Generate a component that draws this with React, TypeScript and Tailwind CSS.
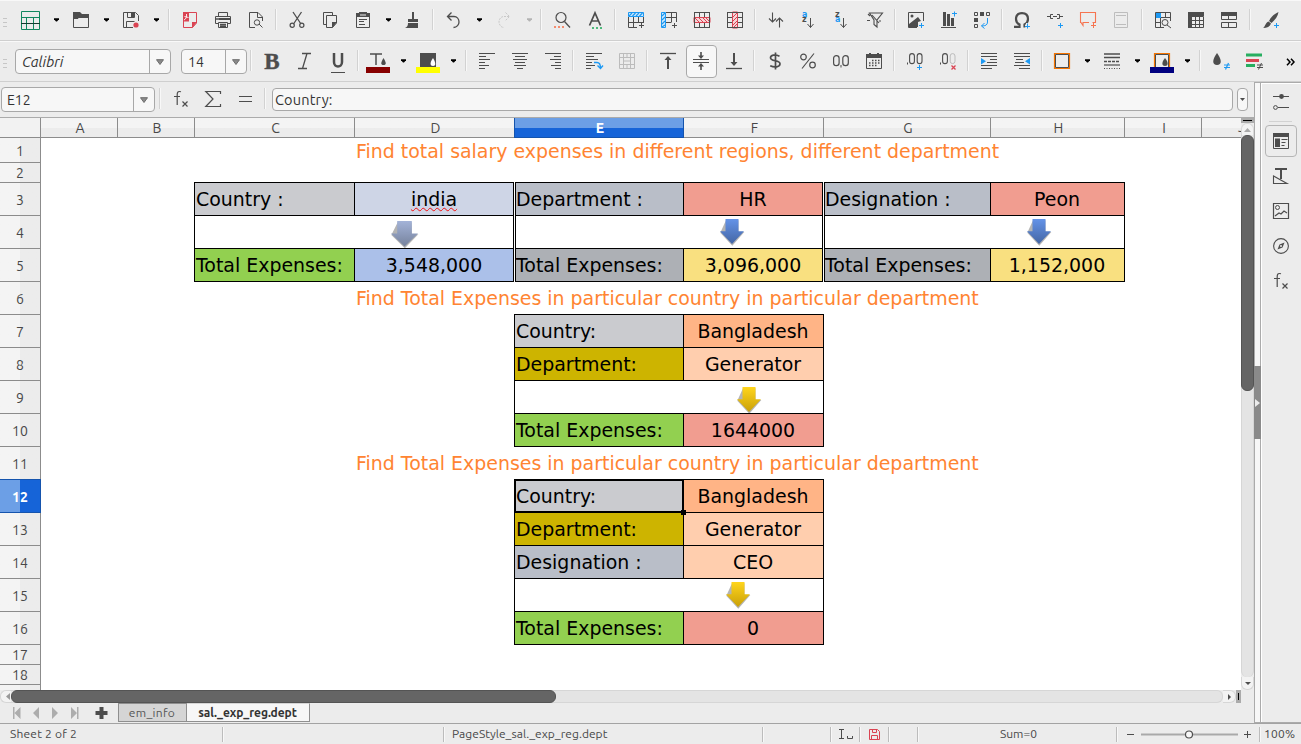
import React from "react";

type Kids = { children?: React.ReactNode };

const K = "#4d4d4d";
const B = "#1d99f3";
const R = "#da4453";
const G = "#27ae60";
const O = "#f67450";

function Icon({ children, w = 16 }: Kids & { w?: number }) {
  return (
    <svg width={w} height={20} viewBox={`0 0 ${w} 20`} fill="none" stroke={K} strokeWidth={1} className="block shrink-0 overflow-visible">
      {children}
    </svg>
  );
}

function Slot({ children }: Kids) {
  return <div className="flex w-[33px] shrink-0 pl-[9px]">{children}</div>;
}

function WideSlot({ children }: Kids) {
  return <div className="flex w-[33px] shrink-0 pl-[5px]">{children}</div>;
}

function Caret({ off = false }: { off?: boolean }) {
  return (
    <div className="flex w-[17px] shrink-0 pt-[6px] pl-[7px]">
      <svg width="5" height="4" viewBox="0 0 5 4" className="block">
        <path d="M0 .3h5v1L3 3.5H2L0 1.3z" fill={off ? "#b4b4b4" : "#000"} />
      </svg>
    </div>
  );
}

function Sep({ className = "w-[8px]" }: { className?: string }) {
  return (
    <div className={"-mt-[3px] flex h-[21px] shrink-0 justify-center " + className}>
      <div className="w-[2px] border-l border-[#d2d2d2] bg-[#f8f8f8]" />
    </div>
  );
}

function Grip() {
  return (
    <div className="mt-[6px] ml-[3px] flex h-[9px] w-[4px] shrink-0 flex-col justify-between">
      <div className="h-px bg-[#c6c6c6]" />
      <div className="h-px bg-[#c6c6c6]" />
      <div className="h-px bg-[#c6c6c6]" />
    </div>
  );
}

function SortLetter({ y, fill, children }: Kids & { y: number; fill: string }) {
  return (
    <text x={1} y={y} fontSize={8} fill={fill} stroke="none" fontFamily='"DejaVu Sans", sans-serif' fontWeight="bold">
      {children}
    </text>
  );
}

const gridLines = "M.5 .5h15v15H.5zM.5 5.5h15M.5 10.5h15M5.5 .5v15M10.5 .5v15";

function Standard() {
  return (
    <div className="flex h-[41px] items-start border-t border-b border-t-[#f8f8f8] border-b-[#cfcfcf] pt-[11px]">
      <Grip />
      <div className="flex w-[40px] shrink-0 pl-[14px]">
        <Icon w={19}>
          <path d="M.5 -.5h18v18H.5z M.5 5.5h18 M5.5 5.5v12 M12.5 5.5v12" stroke="#12875f" />
          <path d="M0 11.5h19" stroke="#143c30" />
        </Icon>
      </div>
      <Caret />
      <Slot>
        <Icon><path d="M0 0h7l2 2h7v4H6L4 6H1v9H0z" fill={K} stroke="none" /><path d="M.5 6.5H5l1.500-2H15.500v11H.5z" /></Icon>
      </Slot>
      <Caret />
      <Slot>
        <Icon>
          <path d="M10 15.500H.5V.5h12l3 3V9M3.500 15.500v-6h8M4.500 .5v5h7v-5" />
          <path d="M8 1h3v4H8z" fill={K} stroke="none" /><circle cx="13" cy="13" r="2.600" fill={R} stroke="none" />
        </Icon>
      </Slot>
      <Caret />
      <Sep className="w-[9px]" />
      <Slot>
        <Icon>
          <path d="M1 0h6v9.500H1z" fill={R} stroke="none" /><path d="M7 .5h7.500V11l-4 4.500H1.500V9" stroke={R} />
          <path d="M15 10h-5v6z" fill={R} stroke="none" /><path d="M2 8c2-1 3-3 2.500-6M2.500 4.500c1.500 0 2.500 1 4 1" stroke="#fff" strokeWidth=".9" />
        </Icon>
      </Slot>
      <Slot>
        <Icon><path d="M3.500 4V.5h9V4M.5 4.500h15v7H.5z" /><path d="M4 6h11v2H4zM4 11h8v4H4z" fill={K} stroke="none" /><path d="M3.500 10.500h9v5h-9z" fill="#ececec" /><path d="M5 12.500h6M1 7h14M5 14.200h6" strokeWidth="1.600" /></Icon>
      </Slot>
      <Slot>
        <Icon><path d="M7 15.500H1.500V.5H10l4.500 4.500v4M9.500 .5v5h5M11 12l3.500 3.500" /><circle cx="9" cy="10.500" r="2.700" /></Icon>
      </Slot>
      <Sep />
      <Slot>
        <Icon><path d="M4 0l8 12M12.500 0L4.500 12" strokeWidth="1.300" /><circle cx="3.200" cy="13.200" r="2.100" strokeWidth="1.200" /><circle cx="12.800" cy="13.200" r="2.100" strokeWidth="1.200" /></Icon>
      </Slot>
      <Slot>
        <Icon><path d="M4 12.500H1.500V.5h9V3M4.500 15.500v-12h10V11l-4 4.500z" /><path d="M15 10h-5v6z" fill={K} stroke="none" /></Icon>
      </Slot>
      <Slot>
        <Icon><path d="M1.500 2.500h13v13h-13z" /><path d="M1 1h3V0h8v1h3v4H1z" fill={K} stroke="none" /><path d="M5 3h6" stroke="#ececec" /><path d="M4 7.500h8M4 9.500h5M4 12.500h6" /></Icon>
      </Slot>
      <Caret />
      <Slot>
        <Icon><path d="M7 0h2v7h4v3H3V7h4zM3 11h10v5H0c2-1 3-2 3-5z" fill={K} stroke="none" /></Icon>
      </Slot>
      <Sep />
      <Slot>
        <Icon><path d="M5.500 .5l-4 4 4 4M2 4.500h6c3 0 5 2.500 5 5.500 0 2.500-2 5.500-5.500 5.500" strokeWidth="1.300" /></Icon>
      </Slot>
      <Caret />
      <Slot>
        <Icon><g stroke="#c9c9c9" strokeDasharray="2 1"><path d="M9.500 .5l4 4-4 4M13 4.500H8c-3 0-5 2.500-5 5.500 0 2.500 2 5.500 5 5.500" /></g></Icon>
      </Slot>
      <Caret off />
      <Sep />
      <Slot>
        <Icon><circle cx="7" cy="5.500" r="5" strokeWidth="1.200" /><path d="M10.500 9.500l5.500 6" strokeWidth="1.300" /><path d="M0 15h2M4 15h2M8 15h2" stroke={O} strokeWidth="2" opacity=".8" /></Icon>
      </Slot>
      <Slot>
        <Icon><path d="M2.500 13.500L8 .800 13.500 13.500M4.500 9h7" strokeWidth="1.700" /><path d="M5 16h2M9 16h2M13 16h2" stroke={G} strokeWidth="2" opacity=".8" /></Icon>
      </Slot>
      <Sep />
      <Slot>
        <Icon><path d="M.5 5v10.500H9M.5 10.500h15M5.500 5v10.500M10.500 5v6M15.500 5v6" /><path d="M.5 .5h15v4H.5z" stroke={B} fill="#cfe9fb" /><path d="M1 4l3-3M4.500 4l3-3M8 4l3-3M11.500 4l3-3" stroke={B} strokeWidth="1.200" /><path d="M13.500 11v5M11 13.500h5" /></Icon>
      </Slot>
      <Slot>
        <Icon><path d="M5 .5h10.500V10M5 5.500h10.500M5 10.500h5M10.500 .5v10" /><path d="M.5 .5h4v15h-4z" stroke={B} fill="#cfe9fb" /><path d="M1 4l3-3M1 8l3-3M1 12l3-3M1 15l3-2" stroke={B} strokeWidth="1.200" /><path d="M13.500 11v5M11 13.500h5" /></Icon>
      </Slot>
      <Slot>
        <Icon><path d={gridLines} /><path d="M0 5.500h16v5H0z" fill="#f6d5d8" stroke={R} /><path d="M1 6l4 4M5 6l4 4M9 6l4 4M12 6l3 3" stroke={R} /><path d="M.5 0v16M15.500 0v16" /></Icon>
      </Slot>
      <Slot>
        <Icon><path d={gridLines} /><path d="M5.500 0v16h5V0z" fill="#f6d5d8" stroke={R} /><path d="M6 5l4-4M6 9l4-4M6 13l4-4M7 15l3-3" stroke={R} /><path d="M0 .5h16M0 15.500h16" /></Icon>
      </Slot>
      <Sep />
      <Slot>
        <Icon><path d="M4.500 .5v9M1 6.500l3.500 3.500L8 6.500M11.500 6v9.500M8 9.500L11.500 6l3.500 3.500" strokeWidth="1.100" /></Icon>
      </Slot>
      <Slot>
        <Icon><SortLetter y={4.600} fill={B}>a</SortLetter><SortLetter y={10.400} fill={K}>z</SortLetter><path d="M9.500 6v9.500M6.500 12l3 3.500 3-3.500" /></Icon>
      </Slot>
      <Slot>
        <Icon><SortLetter y={4.600} fill={K}>z</SortLetter><SortLetter y={10.400} fill={B}>a</SortLetter><path d="M9.500 6v9.500M6.500 12l3 3.500 3-3.500" /></Icon>
      </Slot>
      <Slot>
        <Icon><path d="M2.500 1h13L10 8v7l-3-2.500V8zM0 8.500h3M5 3l7 8M1 2l2 2M12 9h2" strokeWidth="1.100" /></Icon>
      </Slot>
      <Sep />
      <Slot>
        <Icon><path d="M9 15.500H.5V.5h15V9" /><circle cx="4" cy="4" r="1.500" fill={K} stroke="none" /><path d="M1 15v-3l9-7 3 4-3 1v5z" fill={K} stroke="none" /><path d="M13.500 11v5M11 13.500h5" stroke={B} /></Icon>
      </Slot>
      <Slot>
        <Icon><path d="M2 0h3v14H2zM6 2h3v12H6zM10 6h3v8h-3z" fill={K} stroke="none" /><path d="M0 15.500h15" /><path d="M13.500 -.5v5M11 1.500h5" stroke={B} /></Icon>
      </Slot>
      <Slot>
        <Icon><path d="M.5 .5h3v3h-3zM12.500 .5h3v3h-3zM.5 12.500h3v3h-3z" /><path d="M6 0h4v4H6zM0 6h4v4H0z" fill={K} stroke="none" /><path d="M13.500 6v4c0 3-2 4-6 4M10.500 11l-3 3 3 2.500" stroke={B} /></Icon>
      </Slot>
      <Sep className="w-[7px]" />
      <Slot>
        <Icon><path d="M0 14.800h5.500V12.500C3.500 11.500 2 10 2 7c0-4 2.500-5.800 6-5.800s6 1.800 6 5.800c0 3-1.500 4.500-3.500 5.500v3" strokeWidth="2.200" /><path d="M13.500 11v6M11 14h5.500" stroke="#ececec" strokeWidth="3" /><path d="M13.500 11.500v5M11 14.500h5" stroke={B} /></Icon>
      </Slot>
      <Slot>
        <Icon><path d="M0 4.500h3M6 2.500H3.500v4H6M6 4.500h4M10 2.500h2.500v4H10M13 4.500h3" /><path d="M13.500 11v5M11 13.500h5" stroke={B} /></Icon>
      </Slot>
      <Slot>
        <Icon><path d="M9 10.500H3v3l-2-3H.5V.5h15v10h-3" stroke={O} strokeWidth="1.100" /><path d="M13.500 11v5M11 13.500h5" stroke={O} /></Icon>
      </Slot>
      <Slot>
        <Icon><path d="M1.500 .5h13v15h-13zM3 3.500h10M3 12.500h10" stroke="#bdbdbd" /></Icon>
      </Slot>
      <Sep className="w-[9px]" />
      <Slot>
        <Icon><path d="M9 15.500H.5V.5h15V9M.5 5.500h15M.5 10.500H6M5.500 .5v15M10.500 .5v5" /><path d="M1 1h5v5H1z" fill={B} stroke="none" /><circle cx="10" cy="10.500" r="3" fill="#ececec" /><path d="M12 13l4 3" /></Icon>
      </Slot>
      <Slot>
        <Icon><path d="M0 0h16v4H4v12H0z" fill={K} stroke="none" /><path d="M4 4.500h11.500v11H4M4 8.500h12M4 12.500h12M7.500 4v12M11.500 4v12" /></Icon>
      </Slot>
      <Slot>
        <Icon><path d="M0 0h16v4H0z" fill={K} stroke="none" /><path d="M.5 3.500h15v4H.5zM.5 10.500h15v5H.5zM7.500 3.500v4M7.500 10.500v5" /></Icon>
      </Slot>
      <Sep className="w-[9px]" />
      <Slot>
        <Icon><path d="M15.500 0C11 2 8 5 6 9l2.500 2C12 8 15 4 15.500 0zM5.500 9.500l2.500 2C7 14.500 4 16 0 16c2-1 2.500-5.500 5.500-6.500z" fill={K} stroke="none" /><path d="M13.500 11v5M11 13.500h5" stroke={B} /></Icon>
      </Slot>
    </div>
  );
}

function DropButton({ className = "" }: { className?: string }) {
  return (
    <div className={"flex items-center justify-center border-l border-[#a8a8a8] pt-px " + className}>
      <svg width="8" height="6" viewBox="0 0 8 6"><path d="M.5 .7h7L4 5.500z" fill="#8b8b8b" stroke="#6c6c6c" /></svg>
    </div>
  );
}

const box = "flex shrink-0 rounded-[4px] border border-[#a8a8a8] bg-[#f7f7f7] text-[#333]";
const ui = "font-['Ubuntu','Open_Sans',sans-serif]";

function Formatting() {
  return (
    <div className="flex h-[41px] items-start border-t border-b border-t-[#f9f9f9] border-b-[#cfcfcf] pt-[11px]">
      <Grip />
      <div className={box + " -mt-[4px] ml-[8px] h-[25px] w-[156px] items-stretch"}>
        <div className="flex-1 pl-[6px] text-[14.5px] leading-[24px] italic">Calibri</div>
        <DropButton className="w-[21px]" />
      </div>
      <div className={box + " -mt-[4px] ml-[10px] h-[25px] w-[66px] items-stretch"}>
        <div className="flex-1 pl-[6px] text-[14px] leading-[24px]">14</div>
        <DropButton className="w-[21px]" />
      </div>
      <Sep />
      <Slot><Icon><text x={8} y={16} fontSize={23} fill={K} stroke={K} strokeWidth=".4" fontFamily='"Liberation Serif", serif' fontWeight="bold" textAnchor="middle">B</text></Icon></Slot>
      <Slot><Icon><path d="M5 .5h9M1 15.500h9M10 .5l-4.500 15" strokeWidth="1.300" /></Icon></Slot>
      <Slot><Icon><path d="M4 0v9c0 6 8 6 8 0V0" strokeWidth="2.500" /><path d="M1 19.500h14" /></Icon></Slot>
      <Sep className="w-[7px]" />
      <WideSlot>
        <Icon w={24}><path d="M4 1h12M10 1v11" strokeWidth="1.500" /><path d="M17.500 5c-3 5-3 7 0 7s3-2 0-7z" fill={K} stroke="none" /><path d="M0 14h24v6H0z" fill="#870000" stroke="none" /></Icon>
      </WideSlot>
      <Caret />
      <WideSlot>
        <Icon w={24}><path d="M4 0h16v14H4z" fill={K} stroke="none" /><path d="M17 5c-3.500 5-3 8 0 8s3-3 0-8z" fill="#fff" stroke="none" /><path d="M0 14h24v6H0z" fill="#ff0" stroke="none" /></Icon>
      </WideSlot>
      <Caret />
      <Sep className="w-[9px]" />
      <Slot><Icon><path d="M0 .5h16M0 3.500h7M0 6.500h11M0 9.500h6M0 12.500h10M0 15.500h6" strokeWidth="1.200" /></Icon></Slot>
      <Slot><Icon><path d="M0 .5h16M3 3.500h10M1 6.500h14M3 9.500h10M2 12.500h12M5 15.500h6" strokeWidth="1.200" /></Icon></Slot>
      <Slot><Icon><path d="M0 .5h16M9 3.500h7M5 6.500h11M10 9.500h6M6 12.500h10M10 15.500h6" strokeWidth="1.200" /></Icon></Slot>
      <Sep />
      <Slot><Icon><path d="M0 .5h16M0 3.500h8M0 6.500h12M0 9.500h6M0 12.500h9M0 15.500h5" strokeWidth="1.200" /><path d="M8 9.500h3c3 0 3.500 2 3.500 5.500M11.500 12.500l3 3 2.500-3" stroke={B} strokeWidth="1.300" /></Icon></Slot>
      <Slot><Icon><path d="M.5 .5h15v15H.5zM.5 4.500h15M.5 11.500h15M4.500 .5v15M8 .5v4M11.500 .5v15M8 12v4M5 8h6" stroke="#bcbcbc" /></Icon></Slot>
      <Sep />
      <Slot><Icon><path d="M0 .5h16" strokeWidth="1.300" /><path d="M8 4v12" strokeWidth="2" /><path d="M4.500 7L8 3l3.500 4z" fill={K} stroke="none" /></Icon></Slot>
      <div className="-mt-[8px] -ml-px flex h-[33px] w-[34px] shrink-0 pl-[3px]">
        <div className="h-[33px] w-[31px] rounded-[4px] border border-[#a9a9a9] bg-[#f7f7f7] pt-[7px] pl-[6px]">
          <Icon><path d="M0 6.500h16M0 9.500h16" strokeWidth="1.200" /><path d="M8 -1v5M8 12v5" strokeWidth="1.600" /><path d="M5 2.500h6L8 6zM5 13.500h6L8 10z" fill={K} stroke="none" /></Icon>
        </div>
      </div>
      <Slot><Icon><path d="M0 15.500h16" strokeWidth="1.300" /><path d="M8 0v11" strokeWidth="2" /><path d="M4.500 9L8 13l3.500-4z" fill={K} stroke="none" /></Icon></Slot>
      <Sep />
      <Slot><Icon><path d="M12.500 3.200C8 1 3.500 2 3.500 4.800c0 4.200 9.500 1.700 9.500 6 0 3.400-5.500 4-9.800 2M8.500 -.5v17" strokeWidth="1.700" /></Icon></Slot>
      <Slot><Icon><circle cx="3.500" cy="4" r="2.800" strokeWidth="1.200" /><circle cx="12.500" cy="12" r="2.800" strokeWidth="1.200" /><path d="M14 .5L2 15.500" strokeWidth="1.200" /></Icon></Slot>
      <Slot><Icon><rect x=".6" y="2.600" width="5.500" height="10" rx="2.700" strokeWidth="1.200" /><rect x="9.800" y="2.600" width="5.500" height="10" rx="2.700" strokeWidth="1.200" /><path d="M8 12v2.500" /></Icon></Slot>
      <Slot><Icon><path d="M.5 1.500h15v14H.5z" /><path d="M0 1h16v4H0z" fill={K} stroke="none" /><path d="M4 0v2M12 0v2" stroke={K} strokeWidth="2" /><path d="M6 7.500h8M3 10h11M3 12.500h8" strokeWidth="1.500" strokeDasharray="1.500 1.500" /></Icon></Slot>
      <Sep />
      <Slot><Icon><path d="M.5 9.500v2" /><rect x="2.600" y=".6" width="4.800" height="10" rx="2.400" strokeWidth="1.100" /><rect x="10.200" y=".6" width="4.800" height="10" rx="2.400" strokeWidth="1.100" /><path d="M12.500 12v5M10 14.500h5" stroke={B} /></Icon></Slot>
      <Slot><Icon><path d="M.5 9.500v2" /><rect x="2.600" y=".6" width="4.800" height="10" rx="2.400" strokeWidth="1.100" /><rect x="10.200" y=".6" width="4.800" height="10" rx="2.400" stroke="#bcbcbc" /><path d="M11.500 12.500l4 4M15.500 12.500l-4 4" stroke={R} strokeWidth="1.300" /></Icon></Slot>
      <Sep />
      <Slot><Icon><path d="M0 .5h16M0 3.500h16M9 6.500h7M6 9.500h10M0 12.500h16M0 15.500h11" strokeWidth="1.200" /><path d="M0 5l5 3.200L0 11.500z" fill={B} stroke="none" /></Icon></Slot>
      <Slot><Icon><path d="M0 .5h16M0 3.500h16M2 6.500h7M1 9.500h9M0 12.500h16M5 15.500h11" strokeWidth="1.200" /><path d="M16 5l-5 3.200 5 3.300z" fill={B} stroke="none" /></Icon></Slot>
      <Sep className="w-[7px]" />
      <Slot><Icon><path d="M.5 .5h15v15H.5z" stroke="#f67400" strokeWidth="1.200" /><path d="M1.500 1.500h13v13h-13z" /></Icon></Slot>
      <Caret />
      <Slot><Icon><path d="M0 1h16M0 4.500h16" strokeWidth="1.500" /><path d="M0 8.500h16" strokeWidth="1.600" strokeDasharray="3 1" /><path d="M0 12h16" strokeWidth="1.200" /><path d="M0 15.500h16" strokeDasharray="1 1.500" /></Icon></Slot>
      <Caret />
      <WideSlot>
        <Icon w={24}><path d="M4.500 14V.5h15V14" stroke="#f67400" strokeWidth="1.200" /><path d="M5.500 14V1.500h13V14" /><path d="M15 5c-4 5-3 8 0 8s4-3 0-8z" fill={K} stroke="none" /><path d="M0 14h24v6H0z" fill="#00007f" stroke="none" /></Icon>
      </WideSlot>
      <Caret />
      <Sep className="w-[9px]" />
      <Slot><Icon><path d="M4 0C-1 7-1 12 4 12s5-5 0-12z" fill={K} stroke="none" /><path d="M11 12h6M11 14.500h6M15.500 10l-3 6.500" stroke={B} strokeWidth="1.200" /></Icon></Slot>
      <Slot><Icon><path d="M0 2h16" stroke={G} strokeWidth="3" /><path d="M0 7.500h13" stroke={R} strokeWidth="3" /><path d="M0 12.500h9" stroke={G} strokeWidth="3" /><path d="M11 12h6M11 14.500h6M15.500 10l-3 6.500" /></Icon></Slot>
      <div className="flex pt-[5px] pl-[16px]">
        <svg width="10" height="8" viewBox="0 0 10 8" fill="none" stroke="#000" strokeWidth="1.500"><path d="M1 .7L4 4 1 7.300M5 .7L8 4 5 7.300" /></svg>
      </div>
    </div>
  );
}

function FxIcon() {
  return (
    <Icon>
      <path d="M8 .8C4.500 -.3 4.200 1.500 4.200 4v10M1 5.500h6" strokeWidth="1.200" />
      <path d="M9.500 10.500l5 5M14.500 10.500l-5 5" strokeWidth="1.200" />
    </Icon>
  );
}

function FormulaBar() {
  return (
    <div className="flex h-[35px] items-start pt-[5px]">
      <div className={box + " ml-px h-[25px] w-[154px] items-stretch"}>
        <div className="flex-1 pl-[5px] text-[14px] leading-[24px]">E12</div>
        <DropButton className="w-[21px]" />
      </div>
      <div className="flex w-[116px] items-start pt-[4px]">
        <Sep className="w-[10px]" />
        <div className="w-[32px] pl-[8px]"><FxIcon /></div>
        <div className="w-[34px] pl-[8px]"><Icon><path d="M15.500 3V.5H.8L8 8 .8 15.500h14.700V13" strokeWidth="1.200" /></Icon></div>
        <div className="w-[30px] pl-[7px]"><Icon><path d="M1 5.500h13M1 10.500h13" /></Icon></div>
        <Sep className="w-[8px]" />
      </div>
      <div className={box + " mt-px ml-px h-[23px] w-[961px] pl-[2px] text-[14.5px] leading-[22px] tracking-[0.2px]"}>Country:</div>
      <div className={box + " mt-px ml-[4px] h-[23px] w-[11px] items-center justify-center"}>
        <svg width="5" height="3" viewBox="0 0 5 3"><path d="M0 0h5L2.500 3z" fill={K} /></svg>
      </div>
    </div>
  );
}

const columns = ["A", "B", "C", "D", "E", "F", "G", "H", "I"];
const rows = Array.from({ length: 18 }, (_, i) => i + 1);
const gridCols = "grid-cols-[41px_77px_77px_160px_160px_169px_140px_167px_134px_77px_39px]";
const gridRows = "grid-rows-[20px_25px_20px_repeat(14,33px)_20px_20px_5px]";

const colStart: Record<string, string> = {
  A: "col-start-2", B: "col-start-3", C: "col-start-4", D: "col-start-5", E: "col-start-6",
  F: "col-start-7", G: "col-start-8", H: "col-start-9", I: "col-start-10",
};
const rowStart = [
  "row-start-1", "row-start-2", "row-start-3", "row-start-4", "row-start-5", "row-start-6", "row-start-7",
  "row-start-8", "row-start-9", "row-start-10", "row-start-11", "row-start-12", "row-start-13", "row-start-14",
  "row-start-15", "row-start-16", "row-start-17", "row-start-18", "row-start-19",
];

const sheetFont = "font-['DejaVu_Sans',sans-serif] text-[18.95px] leading-[32px] whitespace-nowrap";

function Cell({ at, row, className, children }: Kids & { at: string; row: number; className: string }) {
  return (
    <div className={`${colStart[at]} ${rowStart[row]} relative -mt-px border border-black ${sheetFont} text-black ${className}`}>
      {children}
    </div>
  );
}

const label = "pl-px";
const value = "text-center pr-px";

function Title({ row, className = "", children }: Kids & { row: number; className?: string }) {
  return (
    <div className={`col-start-5 col-end-10 ${rowStart[row]} pl-px ${sheetFont} text-[#ff8432] ${className}`}>{children}</div>
  );
}

function Arrow({ className, from, to }: { className: string; from: string; to: string }) {
  return (
    <svg className={"absolute overflow-visible " + className} viewBox="0 0 24 26" preserveAspectRatio="none">
      <defs>
        <linearGradient id={"a" + from.slice(1)} x1="0" y1="0" x2="0" y2="1">
          <stop offset="0" stopColor={from} /><stop offset="1" stopColor={to} />
        </linearGradient>
      </defs>
      <path d="M6 1.200h12.500v12H24.300L12.300 27.200.3 14z" fill="#777" opacity=".55" />
      <path d="M5.500 0h13v12.500H24L12 25.500 0 12.500h5.500z" fill={`url(#a${from.slice(1)})`} />
    </svg>
  );
}

function Sheet() {
  return (
    <div className={`grid h-[573px] w-[1241px] overflow-hidden border-t border-[#ababab] bg-white ${gridCols} ${gridRows}`}>
      <div className="col-start-1 row-start-1 border-r border-b border-[#8c8c8c] bg-[#f2f2f2]" />
      {columns.map((c) => (
        <div
          key={c}
          className={
            `${colStart[c]} row-start-1 border-r border-b pl-[2px] text-center text-[14px] leading-[20px] ${ui} ` +
            (c === "E"
              ? "-ml-px border-l border-[#1554ad] bg-linear-to-b from-[#6c9fe6] from-50% to-[#1664d8] to-50% font-bold text-white"
              : "border-[#8c8c8c] bg-linear-to-b from-[#f4f4f4] from-50% to-[#ececec] to-50% text-[#484848]")
          }
        >
          {c}
        </div>
      ))}
      <div className={`col-start-11 row-start-1 overflow-hidden border-b border-[#8c8c8c] bg-linear-to-b from-[#f4f4f4] from-50% to-[#ececec] to-50% pl-[36px] text-[13px] leading-[18px] text-[#484848] ${ui}`}>J</div>
      {rows.map((r) => (
        <div
          key={r}
          className={
            `col-start-1 ${rowStart[r]} flex items-center justify-center border-r border-b pt-px text-[14px] leading-none ${ui} ` +
            (r === 12
              ? "-mt-px border-t border-[#1554ad] bg-linear-to-r from-[#6c9fe6] from-50% to-[#1664d8] to-50% font-bold text-white"
              : "border-[#8c8c8c] bg-linear-to-r from-[#f4f4f4] from-50% to-[#ececec] to-50% text-[#484848]")
          }
        >
          {r}
        </div>
      ))}
      <div className="col-start-1 row-start-20 border-r border-[#8c8c8c] bg-linear-to-r from-[#f4f4f4] from-50% to-[#ececec] to-50%" />

      <Title row={1} className="-mt-[3px]">Find total salary expenses in different regions, different department</Title>
      <Cell at="C" row={3} className={label + " -ml-px bg-[#cacbcf]"}>Country :</Cell>
      <Cell at="D" row={3} className="mr-px -ml-px bg-[#ced5e6] text-center">
        <span className="underline decoration-[#f01010] decoration-wavy decoration-1 underline-offset-[1px] [text-decoration-skip-ink:none]">india</span>
      </Cell>
      <Cell at="E" row={3} className="bg-[#b9bec8]">Department :</Cell>
      <Cell at="F" row={3} className="mr-px -ml-px bg-[#f19d90] text-center">HR</Cell>
      <Cell at="G" row={3} className="bg-[#b9bec8]">Designation :</Cell>
      <Cell at="H" row={3} className={value + " -ml-px bg-[#f19d90]"}>Peon</Cell>

      <Cell at="C" row={4} className="col-end-6 mr-px -ml-px">
        <Arrow className="top-[5px] left-[196px] h-[26px] w-[27px]" from="#a3b3d8" to="#76829c" />
      </Cell>
      <Cell at="E" row={4} className="col-end-8 mr-px">
        <Arrow className="top-[3px] left-[204px] h-[25.5px] w-[24px]" from="#6493e8" to="#4466a4" />
      </Cell>
      <Cell at="G" row={4} className="col-end-10">
        <Arrow className="top-[3px] left-[202px] h-[25.5px] w-[24px]" from="#6493e8" to="#4466a4" />
      </Cell>

      <Cell at="C" row={5} className={label + " -ml-px bg-[#92d050]"}>Total Expenses:</Cell>
      <Cell at="D" row={5} className="mr-px -ml-px bg-[#abc0e9] text-center">3,548,000</Cell>
      <Cell at="E" row={5} className="bg-[#adb0b5]">Total Expenses:</Cell>
      <Cell at="F" row={5} className="mr-px -ml-px bg-[#f9e080] text-center">3,096,000</Cell>
      <Cell at="G" row={5} className="bg-[#adb0b5]">Total Expenses:</Cell>
      <Cell at="H" row={5} className={value + " -ml-px bg-[#f9e080]"}>1,152,000</Cell>

      <Title row={6}>Find Total Expenses in particular country in particular department</Title>
      <Cell at="E" row={7} className={label + " -ml-px bg-[#cacbcf]"}>Country:</Cell>
      <Cell at="F" row={7} className={value + " -ml-px bg-[#ffb486]"}>Bangladesh</Cell>
      <Cell at="E" row={8} className={label + " -ml-px bg-[#cdb400]"}>Department:</Cell>
      <Cell at="F" row={8} className={value + " -ml-px bg-[#ffceae]"}>Generator</Cell>
      <Cell at="E" row={9} className="col-end-8 -ml-px">
        <Arrow className="top-[6px] left-[221.5px] h-[25.5px] w-[24px]" from="#ffd51c" to="#c9a009" />
      </Cell>
      <Cell at="E" row={10} className={label + " -ml-px bg-[#92d050]"}>Total Expenses:</Cell>
      <Cell at="F" row={10} className={value + " -ml-px bg-[#f19d90]"}>1644000</Cell>

      <Title row={11}>Find Total Expenses in particular country in particular department</Title>
      <Cell at="E" row={12} className="z-10 -ml-px bg-[#cacbcf] pl-px">
        Country:
        <div className="absolute -top-px -right-px -bottom-px -left-px border-2 border-black" />
        <div className="absolute -right-[3px] -bottom-[3px] h-[5px] w-[5px] bg-black" />
      </Cell>
      <Cell at="F" row={12} className={value + " -ml-px bg-[#ffb486]"}>Bangladesh</Cell>
      <Cell at="E" row={13} className={label + " -ml-px bg-[#cdb400]"}>Department:</Cell>
      <Cell at="F" row={13} className={value + " -ml-px bg-[#ffceae]"}>Generator</Cell>
      <Cell at="E" row={14} className={label + " -ml-px bg-[#b9bec8]"}>Designation :</Cell>
      <Cell at="F" row={14} className={value + " -ml-px bg-[#ffceae]"}>CEO</Cell>
      <Cell at="E" row={15} className="col-end-8 -ml-px">
        <Arrow className="top-[3px] left-[211px] h-[25.5px] w-[24px]" from="#ffd51c" to="#c9a009" />
      </Cell>
      <Cell at="E" row={16} className={label + " -ml-px bg-[#92d050]"}>Total Expenses:</Cell>
      <Cell at="F" row={16} className={value + " -ml-px bg-[#f19d90]"}>0</Cell>
    </div>
  );
}

function VerticalBar() {
  return (
    <div className="flex w-[13px] flex-col border-t border-[#ababab] bg-[#ececec]">
      <div className="flex h-[5px] items-center bg-[#ababab] px-[2px]"><div className="h-px w-full bg-black" /></div>
      <div className="flex h-[12px] items-center justify-center rounded-t-[6px] border border-b-0 border-[#d9d9d9] bg-[#f3f3f3]">
        <svg width="7" height="4" viewBox="0 0 7 4"><path d="M0 4h7L3.500 0z" fill="#aaa" /></svg>
      </div>
      <div className="flex-1 rounded-b-[6px] border-x border-[#d6d6d6] bg-[#e4e4e4]">
        <div className="-mx-px h-[256px] rounded-[6px] border border-[#545454] bg-[#656565]" />
      </div>
      <div className="flex h-[13px] items-center justify-center rounded-b-[6px] border border-t-0 border-[#d6d6d6] bg-[#f3f3f3]">
        <svg width="6" height="3" viewBox="0 0 6 3"><path d="M0 0h6L3 3z" fill={K} /></svg>
      </div>
    </div>
  );
}

function HorizontalBar() {
  return (
    <div className="flex h-[13px] w-[1241px]">
      <div className="flex w-[11px] items-center justify-end rounded-l-[6px] border border-r-0 border-[#d6d6d6] bg-[#f3f3f3] pr-px">
        <svg width="4" height="7" viewBox="0 0 4 7"><path d="M4 0v7L0 3.500z" fill="#999" /></svg>
      </div>
      <div className="flex flex-1 rounded-r-[6px] border border-l-0 border-[#d6d6d6] bg-[#e4e4e4]">
        <div className="-my-px w-[545px] rounded-[6px] border border-[#545454] bg-[#656565]" />
      </div>
      <div className="flex w-[13px] items-center justify-center rounded-r-[6px] border border-l-0 border-[#d6d6d6] bg-[#f3f3f3]">
        <svg width="3" height="6" viewBox="0 0 3 6"><path d="M0 0v6l3-3z" fill={K} /></svg>
      </div>
      <div className="flex w-[5px] justify-center bg-[#ababab] py-[3px]"><div className="w-px bg-black" /></div>
    </div>
  );
}

function Tabs() {
  return (
    <div className={"flex h-[20px] items-start text-[12px] leading-[18px] " + ui}>
      <svg width="118" height="20" viewBox="0 0 118 20" fill="#adadad" className="block shrink-0">
        <path d="M13 4h1.500v12H13zM20.500 4v12l-6-6zM39 4v12l-6-6zM52 4v12l6-6zM71 4v12l6-6zM77 4h1.500v12H77z" />
        <path d="M99.500 4h4v4h4v4h-4v4h-4v-4h-4V8h4z" fill={K} />
      </svg>
      <div className="h-[19px] w-[69px] border border-[#8f8f8f] bg-[#d5d5d5] pr-px text-center leading-[17px] tracking-[0.3px] text-[#555]">em_info</div>
      <div className="h-[19px] w-[123px] border-t border-r border-b border-[#8f8f8f] border-t-[#d6d6d6] bg-[#f7f7f7] pr-px text-center leading-[17px] font-bold tracking-[-0.05px] whitespace-nowrap text-[#333]">sal._exp_reg.dept</div>
    </div>
  );
}

const sideIcons = [
  <Icon key="props"><path d="M.5 1.500h15v14H.5z" /><path d="M0 0h16v4H0zM2 5.500h5v8.500H2z" fill={K} stroke="none" /><path d="M8.500 6.500h6M8.500 9.500h4M8.500 12.500h3" /></Icon>,
  <Icon key="styles"><path d="M2 1h12M8 1v10" strokeWidth="2" /><path d="M.5 8v7.500H14z" strokeWidth="1.100" /></Icon>,
  <Icon key="gallery"><path d="M.5 .5h15v15H.5z" strokeWidth="1.200" /><circle cx="4.500" cy="4.500" r="2" /><path d="M2 13l4-3 2 1 3-3 3 2" strokeWidth="1.200" /></Icon>,
  <Icon key="navigator"><circle cx="8" cy="8" r="7.400" strokeWidth="1.100" /><path d="M11.500 4.500L9.500 9.500l-5 2 2-5z" fill={K} stroke="none" /><circle cx="8" cy="8" r="1" fill="#ececec" stroke="none" /></Icon>,
  <FxIcon key="functions" />,
];

function Sidebar() {
  return (
    <div className="flex w-[47px] shrink-0 border-t border-b border-[#ababab]">
      <div className="relative w-[7px] border-x border-[#ababab] bg-[#f7f7f7]">
        <div className="absolute top-[283px] -left-px flex h-[73px] w-[7px] items-center bg-[#8a8a8a]">
          <svg width="6" height="8" viewBox="0 0 6 8"><path d="M1 0v8l5-4z" fill="#ececec" /></svg>
        </div>
      </div>
      <div className="flex w-[40px] flex-col border-t border-l border-white pl-[3px]">
        <div className="h-[37px] pt-[9px] pl-[8px]">
          <Icon><path d="M0 3.500h16M5 14.500h11" /><circle cx="8.500" cy="3.500" r="2.400" fill={K} stroke="none" /><circle cx="2.500" cy="14.500" r="1.900" /></Icon>
        </div>
        <div className="ml-[4px] h-[4px] w-[23px] border-t border-[#d2d2d2]" />
        {sideIcons.map((icon, i) => (
          <div key={i} className={"mb-[3px] h-[32px] w-[32px] shrink-0 " + (i === 0 ? "rounded-[4px] border border-[#b5b5b5] pt-[7px] pl-[7px]" : "pt-[8px] pl-[8px]")}>
            {icon}
          </div>
        ))}
      </div>
    </div>
  );
}

function Field({ className, children, first = false }: Kids & { className: string; first?: boolean }) {
  return (
    <div className={"flex h-[20px] shrink-0 items-center whitespace-nowrap " + className}>
      {!first && <div className="h-[15px] w-[2px] shrink-0 border-l border-[#bcbcbc] bg-[#f8f8f8]" />}
      {children}
    </div>
  );
}

function StatusBar() {
  return (
    <div className={"flex h-[21px] border-t border-[#a3a3a3] text-[12px] text-[#484848] " + ui}>
      <Field first className="w-[222px] pl-[10px]"><span className="tracking-[0.2px]">Sheet 2 of 2</span></Field>
      <Field className="w-[221px]" />
      <Field className="w-[319px]"><span className="pl-[7px] tracking-[0.03px]">PageStyle_sal._exp_reg.dept</span></Field>
      <Field className="w-[68px]" />
      <Field className="w-[29px]">
        <svg width="16" height="12" viewBox="0 0 16 12" fill="none" stroke={K} className="ml-[7px]"><path d="M0 1.500h5M0 10.500h5M2.500 1.500v9M8.500 8v2.500h5V8" /></svg>
      </Field>
      <Field className="w-[29px]">
        <svg width="11" height="11" viewBox="0 0 11 11" fill="none" stroke={R} className="ml-[8px]"><path d="M.5 .5h8l2 2v8H.5zM2.500 10V6.500h6V10M3.500 .5v3h4v-3" /></svg>
      </Field>
      <Field className="w-[29px]" />
      <Field className="w-[199px]"><span className="flex-1 pl-[2px] text-center">Sum=0</span></Field>
      <Field className="w-[143px]">
        <svg width="130" height="14" viewBox="0 0 130 14" fill="none" stroke={K} className="ml-[7px]">
          <path d="M2 7.500h7M119 7.500h7M122.500 4v7" />
          <path d="M16 7.500h97" stroke="#a9a9a9" strokeWidth="2" />
          <circle cx="64" cy="7.500" r="3.500" fill="#f7f7f7" strokeWidth="1.200" />
        </svg>
      </Field>
      <Field className="w-[42px]"><span className="pl-[3px] tracking-[0.2px]">100%</span></Field>
    </div>
  );
}

export default function App() {
  return (
    <div className={"flex h-[744px] w-[1301px] flex-col overflow-hidden bg-[#ececec] " + ui}>
      <Standard />
      <Formatting />
      <div className="flex h-[641px]">
        <div className="flex w-[1254px] flex-col">
          <FormulaBar />
          <div className="flex h-[573px]">
            <Sheet />
            <VerticalBar />
          </div>
          <HorizontalBar />
          <Tabs />
        </div>
        <Sidebar />
      </div>
      <StatusBar />
    </div>
  );
}
